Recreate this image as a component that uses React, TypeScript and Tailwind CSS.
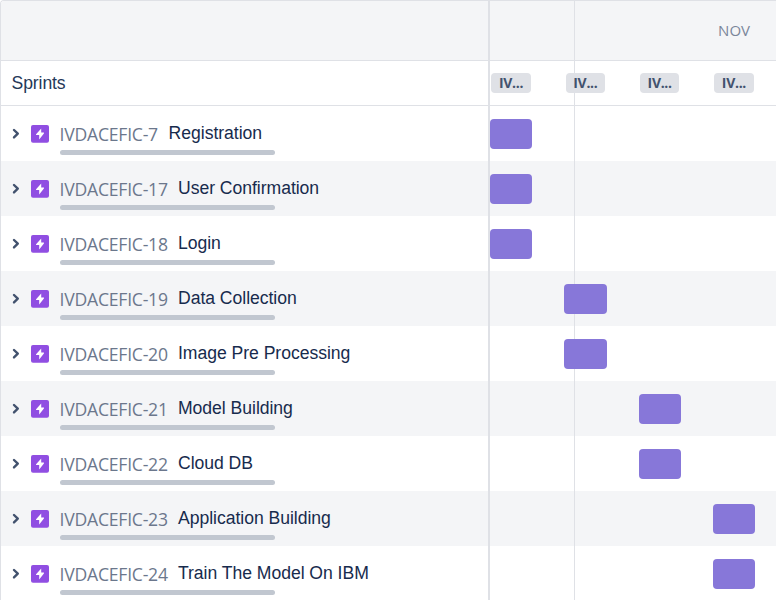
const rows = [
  { id: 'IVDACEFIC-7', title: 'Registration', slot: 0 },
  { id: 'IVDACEFIC-17', title: 'User Confirmation', slot: 0 },
  { id: 'IVDACEFIC-18', title: 'Login', slot: 0 },
  { id: 'IVDACEFIC-19', title: 'Data Collection', slot: 1 },
  { id: 'IVDACEFIC-20', title: 'Image Pre Processing', slot: 1 },
  { id: 'IVDACEFIC-21', title: 'Model Building', slot: 2 },
  { id: 'IVDACEFIC-22', title: 'Cloud DB', slot: 2 },
  { id: 'IVDACEFIC-23', title: 'Application Building', slot: 3 },
  { id: 'IVDACEFIC-24', title: 'Train The Model On IBM', slot: 3 },
];

const SLOT_WIDTH = 74.3;

function Chevron() {
  return (
    <svg className="h-3 w-2 shrink-0" viewBox="0 0 8 12" fill="none" stroke="#42526e" strokeWidth="2.4" strokeLinecap="round" strokeLinejoin="round">
      <path d="M2 2 5.8 5.7 2 9.4" />
    </svg>
  );
}

function EpicIcon() {
  return (
    <svg className="ml-[11px] h-[18px] w-[18px] shrink-0" viewBox="0 0 18 18">
      <rect width="18" height="17.7" rx="2" fill="#904ee2" />
      <path d="M10.2 3.4v4.2h2.3c.5 0 .6.4.4.8l-4.7 6.2V10H5.5c-.5 0-.6-.4-.4-.8z" fill="#fff" />
    </svg>
  );
}

export default function App() {
  return (
    <div className="relative flex h-[600px] w-[776px] flex-col overflow-hidden rounded-tl-[4px] border-t border-l border-[#dfe1e6] bg-white font-['Liberation_Sans',sans-serif] text-[#172b4d]">
      <div className="flex h-[60px] shrink-0 border-b border-[#dfe1e6] bg-[#f4f5f7]">
        <div className="w-[489px]" />
        <div className="flex flex-1 items-center justify-end pr-[26px] font-['Open_Sans',sans-serif] text-[15px] text-[#7a869a]">
          <span>NOV</span>
        </div>
      </div>
      <div className="flex h-[45px] shrink-0 items-center border-b border-[#dfe1e6]">
        <div className="w-[489px] pl-[10.5px] text-[17.6px] tracking-[-0.1px] text-[#253858]">Sprints</div>
        <div className="relative z-10 flex gap-[34.7px] pl-[1.3px]">
          {[0, 1, 2, 3].map((n) => (
            <span key={n} className="flex h-5 w-[39.6px] items-center justify-center rounded-[4px] bg-[#dfe1e6] pb-px font-['Open_Sans',sans-serif] text-[14px] font-bold tracking-[-0.3px] text-[#42526e]">
              IV...
            </span>
          ))}
        </div>
      </div>
      {rows.map((row, index) => (
        <div key={row.id} className={`flex h-[55px] shrink-0 ${index % 2 ? 'bg-[#f4f5f7]' : 'bg-white'}`}>
          <div className="flex w-[489px] items-start pl-[11px]">
            <div className="flex h-[55px] items-center">
              <Chevron />
              <EpicIcon />
            </div>
            <div className="ml-[11px] flex-1">
              <div className="flex h-11 items-start pt-[15px] whitespace-nowrap">
                <span className={`shrink-0 -ml-[0.4px] font-['Open_Sans',sans-serif] text-[17.6px] leading-[26px] tracking-[-0.24px] text-[#6b778c] ${index === 0 ? 'w-[109px]' : 'w-[118.4px]'}`}>{row.id}</span>
                <span className="text-[17.6px] leading-6 tracking-[-0.04px]">{row.title}</span>
              </div>
              <div className="h-[5px] w-[215px] rounded-[3px] bg-[#c1c7d0]" />
            </div>
          </div>
          <div className="relative z-10 flex-1 pt-[12.7px]">
            <div className="h-[30px] w-[42.3px] rounded-[4px] bg-[#8777d9]" style={{ marginLeft: row.slot * SLOT_WIDTH }} />
          </div>
        </div>
      ))}
      <div className="absolute top-0 left-[487px] h-full w-[2px] bg-[#dfe1e6]" />
      <div className="absolute top-0 left-[572.7px] h-full w-px bg-[#dfe1e6]" />
    </div>
  );
}
